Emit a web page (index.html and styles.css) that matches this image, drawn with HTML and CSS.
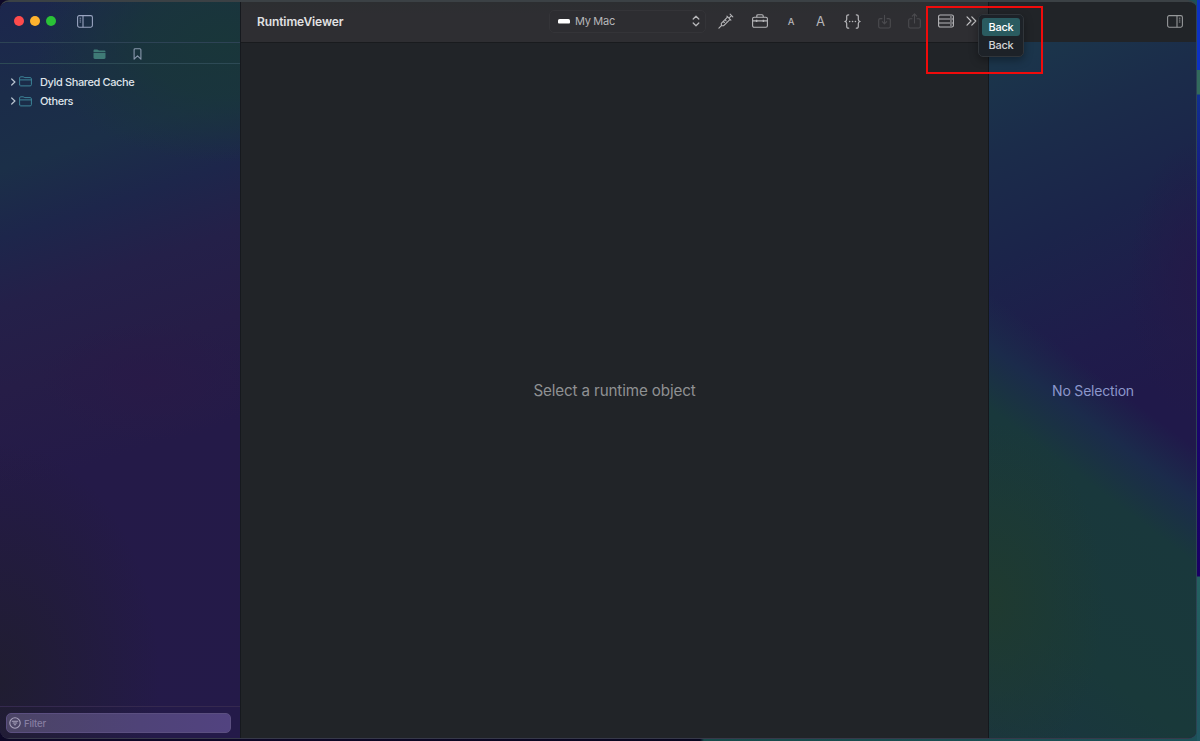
FILE: index.html
```html
<!DOCTYPE html>
<html lang="en">
<head>
  <meta charset="UTF-8" />
  <meta name="viewport" content="width=device-width, initial-scale=1.0"/>
  <title>RuntimeViewer</title>
  <link rel="stylesheet" href="styles.css">
</head>
<body>

  <div class="window">
    <aside class="sidebar">
      <div class="titlebar">
        <span class="light close"></span>
        <span class="light minimize"></span>
        <span class="light expand"></span>
        <svg class="toggle" width="16" height="13" viewBox="0 0 16 13" fill="none" stroke="currentColor">
          <rect x=".6" y=".6" width="14.8" height="11.6" rx="1.6" stroke-width="1.1"/>
          <path d="M6 .6v11.6" stroke-width="1.1"/>
          <path d="M2.6 3.2h1.5M2.6 5.1h1.5M2.6 7h1.5" stroke-width=".9"/>
        </svg>
      </div>

      <div class="tabs">
        <svg class="tab-folder" width="13" height="11" viewBox="0 0 13 11" fill="currentColor">
          <path d="M.5 3V1.9C.5 1 1 .6 1.8.6h2.4c.9 0 1 .8 1.9.8H11c.9 0 1.5.5 1.5 1.3V3z"/>
          <path d="M.5 3.7h12v4.9c0 .9-.5 1.4-1.4 1.4H1.9C1 10 .5 9.5.5 8.6z"/>
        </svg>
        <svg class="tab-bookmark" width="9" height="12" viewBox="0 0 9 12" fill="none" stroke="currentColor" stroke-width="1.1" stroke-linejoin="round">
          <path d="M1.1 1.800c0-.7.4-1.100 1.100-1.100h4.600c.7 0 1.100.4 1.100 1.100v9.400L4.500 7.900l-3.400 3.300z"/>
        </svg>
      </div>

      <ul class="tree">
        <li>
          <svg class="arrow" width="6" height="8" viewBox="0 0 6 8"><path d="M1.700 1l3.200 3-3.200 3"/></svg>
          <svg class="folder" width="13" height="11" viewBox="0 0 13 11"><path d="M.6 8.700V2C.6 1.200 1 .8 1.800.8h2.300c.8 0 1 .8 1.800.8h5.200c.8 0 1.300.4 1.300 1.200v5.900c0 .8-.5 1.200-1.300 1.200H1.900C1.100 9.900.6 9.500.6 8.700zM.6 3.900h11.800"/></svg>
          <span>Dyld Shared Cache</span>
        </li>
        <li>
          <svg class="arrow" width="6" height="8" viewBox="0 0 6 8"><path d="M1.700 1l3.200 3-3.200 3"/></svg>
          <svg class="folder" width="13" height="11" viewBox="0 0 13 11"><path d="M.6 8.700V2C.6 1.200 1 .8 1.800.8h2.300c.8 0 1 .8 1.800.8h5.200c.8 0 1.300.4 1.300 1.200v5.900c0 .8-.5 1.200-1.300 1.200H1.900C1.100 9.900.6 9.500.6 8.700zM.6 3.900h11.800"/></svg>
          <span>Others</span>
        </li>
      </ul>

      <div class="filter-bar">
        <div class="filter">
          <svg width="12" height="12" viewBox="0 0 12 12" fill="none" stroke="currentColor" stroke-width="1.1" stroke-linecap="round">
            <circle cx="6" cy="6" r="5.2"/>
            <path d="M3.300 4.300h5.400M4.200 6h3.600M5.300 7.800h1.400"/>
          </svg>
          <span>Filter</span>
        </div>
      </div>
    </aside>

    <main class="content">
      <header class="toolbar">
        <h1>RuntimeViewer</h1>
        <div class="source">
          <svg width="12" height="5" viewBox="0 0 12 5"><path d="M1.700 0h8.600C11.500 0 12 .9 12 2v1.600c0 .6-.4.9-.9.9H.9c-.5 0-.9-.3-.9-.9V2C0 .9.500 0 1.700 0z" fill="#fff"/></svg>
          <span>My Mac</span>
          <svg class="updown" width="8" height="12" viewBox="0 0 8 12" fill="none" stroke="currentColor" stroke-width="1.3" stroke-linecap="round" stroke-linejoin="round"><path d="M1.200 4L4 1.200 6.800 4M1.200 8L4 10.800 6.800 8"/></svg>
        </div>
        <div class="tool tool-wide">
          <svg width="16" height="16" viewBox="0 0 16 16" fill="none" stroke="currentColor" stroke-width="1.1" stroke-linecap="round" stroke-linejoin="round">
            <path d="M.9 15.100l2.500-2.500M3.400 12.600l-.1-2.300 6.400-6.400 2.400 2.400-6.400 6.400zM8.900 3.100l4 4M11 5.100l2.500-2.500M12.100 1.200l2.700 2.700M5.300 8.400l1.100 1.100M7 6.700l1.100 1.100"/>
          </svg>
        </div>
        <div class="tool tool-wide">
          <svg width="16" height="14" viewBox="0 0 16 14" fill="none" stroke="currentColor" stroke-width="1.1" stroke-linejoin="round">
            <rect x=".6" y="3.2" width="14.8" height="10" rx="1.5"/>
            <path d="M4.800 3.200V1.900c0-.8.4-1.200 1.200-1.200h4c.8 0 1.200.4 1.200 1.200v1.300M.6 6.900h14.800"/>
            <path d="M4.600 5.700v2.400M11.400 5.700v2.400" stroke-width="1.5"/>
          </svg>
        </div>
        <div class="tool tool-small"><span class="font-smaller">A</span></div>
        <div class="tool"><span class="font-bigger">A</span></div>
        <div class="tool tool-braces">
          <svg width="17" height="15" viewBox="0 0 17 15" fill="none" stroke="currentColor" stroke-width="1.2" stroke-linecap="round" stroke-linejoin="round">
            <path d="M4.700.8C3.300.8 2.700 1.400 2.700 2.600v2.800c0 1.300-.6 1.900-1.900 2.100 1.300.2 1.900.8 1.900 2.100v2.800c0 1.200.6 1.800 2 1.800M12.300.8c1.400 0 2 .6 2 1.800v2.800c0 1.300.6 1.900 1.900 2.100-1.300.2-1.900.8-1.900 2.100v2.800c0 1.200-.6 1.800-2 1.800"/>
            <path d="M5.600 7.500h.1M8.500 7.500h.1M11.400 7.500h.1" stroke-width="1.5"/>
          </svg>
        </div>
        <div class="tool tool-braces disabled">
          <svg width="13" height="15" viewBox="0 0 13 15" fill="none" stroke="currentColor" stroke-width="1.1" stroke-linecap="round" stroke-linejoin="round">
            <path d="M4 4.600H2.200c-1 0-1.500.5-1.500 1.500v6.400c0 1 .5 1.500 1.500 1.500h8.600c1 0 1.500-.5 1.500-1.500V6.100c0-1-.5-1.500-1.500-1.500H9M6.500 1.300v8.400M4.300 7.600l2.200 2.200 2.200-2.200"/>
          </svg>
        </div>
        <div class="tool tool-small disabled">
          <svg width="13" height="16" viewBox="0 0 13 16" fill="none" stroke="currentColor" stroke-width="1.1" stroke-linecap="round" stroke-linejoin="round">
            <path d="M4 5.800H2.200c-1 0-1.500.5-1.500 1.500v6.200c0 1 .5 1.500 1.500 1.500h8.600c1 0 1.500-.5 1.500-1.500V7.300c0-1-.5-1.500-1.500-1.500H9M6.500 10V1M4.300 3.100L6.500.9l2.200 2.200"/>
          </svg>
        </div>
        <div class="tool tool-rack">
          <svg width="16" height="14" viewBox="0 0 16 14" fill="none" stroke="currentColor" stroke-width="1.1">
            <rect x=".6" y="1" width="14.8" height="12" rx="1.6"/>
            <path d="M.6 5h14.800M.6 9h14.800"/>
            <path d="M12.300 3h1.300M12.300 7h1.300M12.300 11h1.300" stroke-width="1.3"/>
          </svg>
        </div>
        <div class="overflow">
          <svg width="11" height="10" viewBox="0 0 11 10" fill="none" stroke="currentColor" stroke-width="1.2" stroke-linecap="round" stroke-linejoin="round"><path d="M1 .9L5 5 1 9.100M5.800.9l4 4.100-4 4.100"/></svg>
          <div class="menu">
            <div class="menu-item selected">Back</div>
            <div class="menu-item">Back</div>
          </div>
          <div class="highlight"></div>
        </div>
      </header>
      <div class="placeholder">Select a runtime object</div>
    </main>

    <aside class="inspector">
      <div class="inspector-bar">
        <svg width="16" height="13" viewBox="0 0 16 13" fill="none" stroke="currentColor">
          <rect x=".6" y=".6" width="14.8" height="11.6" rx="1.6" stroke-width="1.1"/>
          <path d="M10 .6v11.6" stroke-width="1.1"/>
          <path d="M11.9 3.2h1.5M11.9 5.1h1.5M11.9 7h1.5" stroke-width=".9"/>
        </svg>
      </div>
      <div class="no-selection">No Selection</div>
    </aside>
  </div>

</body>
</html>
```

FILE: styles.css
```css
* {
  box-sizing: border-box;
}

body {
  margin: 0;
  height: 741px;
  padding: 0 3px 2px 0;
  overflow: hidden;
  font-family: Inter, "Liberation Sans", sans-serif;
  font-size: 11px;
  color: #dfe3ea;
  /* desktop showing behind the window */
  background:
    linear-gradient(#0c31c4 0 70px, #326a5c 70px 94px, #102f91 95px, #1b0a75 260px, #190064 576px, #236060 577px, #1f5661 741px) right top / 3px 100% no-repeat,
    linear-gradient(90deg, #0d0827 0 240px, #08071f 700px, #174a4a 704px, #1d5058 100%);
}

svg {
  display: block;
  flex: none;
}

.window {
  display: flex;
  height: 739px;
  border-top: 2px solid #3b4145;
  border-bottom: 1px solid #37394a;
  border-radius: 9px;
  overflow: hidden;
}

/* sidebar */
.sidebar {
  display: flex;
  flex-direction: column;
  width: 241px;
  flex: none;
  background:
    radial-gradient(ellipse 190px 120px at 225px 40px, #19363a 0%, #19363acc 45%, #19363a00 100%),
    radial-gradient(ellipse 160px 240px at 0 680px, #201d31 0%, #201d3100 100%),
    radial-gradient(ellipse 110px 60px at 150px 260px, #281a47 0%, #281a4700 100%) 0 120px no-repeat,
    linear-gradient(162deg, #1c264d 0, #1b2c49 90px, #1b2f48 160px, #1d264b 225px, #242049 290px, #261d47 370px, #241a48 470px, #241a49 100%);
  border-right: 1px solid #16191e;
}

.titlebar {
  display: flex;
  align-items: center;
  height: 41px;
  padding: 0 0 2px 14px;
  gap: 6px;
  border-bottom: 1px solid #2d4355;
}

.light {
  width: 10px;
  height: 10px;
  border-radius: 50%;
}

.close {
  background: #fe4b4c;
}

.minimize {
  background: #feb22e;
}

.expand {
  background: #2ac237;
}

.toggle {
  margin-left: 15px;
  color: #99a4c0;
}

.tabs {
  display: flex;
  align-items: center;
  justify-content: center;
  gap: 27px;
  height: 21px;
  padding: 2px 6px 0 0;
  border-bottom: 1px solid #2d4a55;
}

.tab-folder {
  color: #3f7b76;
}

.tab-bookmark {
  color: #8998ad;
}

.tree {
  flex: 1;
  margin: 0;
  padding: 8px 0 0 10px;
  list-style: none;
}

.tree li {
  display: flex;
  align-items: center;
  height: 19.5px;
}

.tree span {
  margin-left: 8px;
  font-weight: 500;
  letter-spacing: -0.38px;
}

.arrow,
.folder {
  fill: none;
  stroke: #b9c4d0;
  stroke-width: 1.2;
  stroke-linecap: round;
}

.folder {
  margin-left: 3px;
  stroke: #3d8498;
  stroke-width: 1;
}

.filter-bar {
  height: 32px;
  padding: 6px 9px 0 6px;
  border-top: 1px solid #35294f;
}

.filter {
  display: flex;
  align-items: center;
  gap: 3px;
  height: 20px;
  padding-left: 2px;
  border: 1px solid #5b4f80;
  border-radius: 5px;
  background: linear-gradient(90deg, #4b4465, #4f4378 60%, #524380);
  font-size: 9.5px;
  font-weight: 500;
  letter-spacing: -0.15px;
  color: #877fa3;
}

.filter svg {
  color: #aaa3bd;
}

/* main area */
.content {
  display: flex;
  flex-direction: column;
  width: 747px;
  flex: none;
  background: #212428;
}

.toolbar {
  display: flex;
  align-items: center;
  height: 41px;
  padding: 0 0 2px 16px;
  background: linear-gradient(#2c2e31, #2e2e32 30%);
  border-bottom: 1px solid #191b1e;
  color: #b6b6b9;
}

.toolbar h1 {
  width: 292px;
  margin: 0;
  font-size: 12px;
  font-weight: 600;
  letter-spacing: -0.1px;
  color: #e1e1e2;
}

.source {
  display: flex;
  align-items: center;
  width: 157px;
  height: 23px;
  padding: 0 5px 0 8px;
  border: 1px solid #343438;
  border-radius: 5px;
  background: #2d2d31;
  gap: 5px;
  margin-right: 3px;
}

.source span {
  letter-spacing: -0.3px;
}

.updown {
  margin-left: auto;
}

.tool {
  display: flex;
  justify-content: center;
  align-items: center;
  width: 31px;
  height: 24px;
}

.tool-wide {
  width: 34px;
}

.tool-small {
  width: 28px;
}

.tool-braces {
  width: 32px;
}

.tool-rack {
  width: 36px;
}

.font-smaller {
  font-size: 9.5px;
  font-weight: 500;
}

.font-bigger {
  font-size: 13px;
}

.disabled {
  color: #4b4b4f;
}

.overflow {
  position: relative;
  margin-left: 2px;
  color: #c2c2c4;
}

/* overflow menu floats above the toolbar and the inspector */
.menu {
  position: absolute;
  z-index: 2;
  left: 12px;
  top: -2px;
  width: 46px;
  height: 43px;
  padding: 3px;
  border: 1px solid #30353a;
  border-radius: 5px;
  background: #1d2228;
  box-shadow: 0 3px 8px rgba(0,0,0,0.35);
}

.menu-item {
  height: 18px;
  line-height: 18px;
  text-align: center;
  font-weight: 500;
  letter-spacing: -0.3px;
  color: #d0d3d6;
}

.selected {
  border-radius: 3px;
  background: #2a5b60;
  color: #fff;
}

.highlight {
  position: absolute;
  z-index: 3;
  left: -40px;
  top: -10px;
  width: 117px;
  height: 68px;
  border: 2px solid #f00b0b;
}

.placeholder,
.no-selection {
  flex: 1;
  display: flex;
  align-items: center;
  justify-content: center;
  font-size: 15.2px;
  letter-spacing: -0.13px;
  color: #8f9193;
}

/* inspector */
.inspector {
  display: flex;
  flex-direction: column;
  flex: 1;
  border-left: 1px solid #14181d;
  border-right: 1px solid #2d4353;
  background:
    radial-gradient(ellipse 110px 180px at 5px 600px, #1f3a30 0%, #1f3a3000 100%),
    radial-gradient(ellipse 65px 140px at 205px 280px, #231a48 0%, #231a4800 100%),
    linear-gradient(217deg, #1b304b00 0, #1b304b00 50%, #1b2b4b 56%, #19383c 63%, #19393a 83%, #1a3540 100%),
    linear-gradient(155deg, #1b354b 60px, #1b2c4a 140px, #1b244a 240px, #1f1c4b 350px, #20194a 420px);
}

.inspector-bar {
  display: flex;
  align-items: center;
  justify-content: flex-end;
  height: 40px;
  padding: 0 13px 2px 0;
  background: #212428;
  color: #96989a;
}

.no-selection {
  padding-left: 1px;
  font-size: 14px;
  letter-spacing: -0.2px;
  color: #8c97cb;
}
```
